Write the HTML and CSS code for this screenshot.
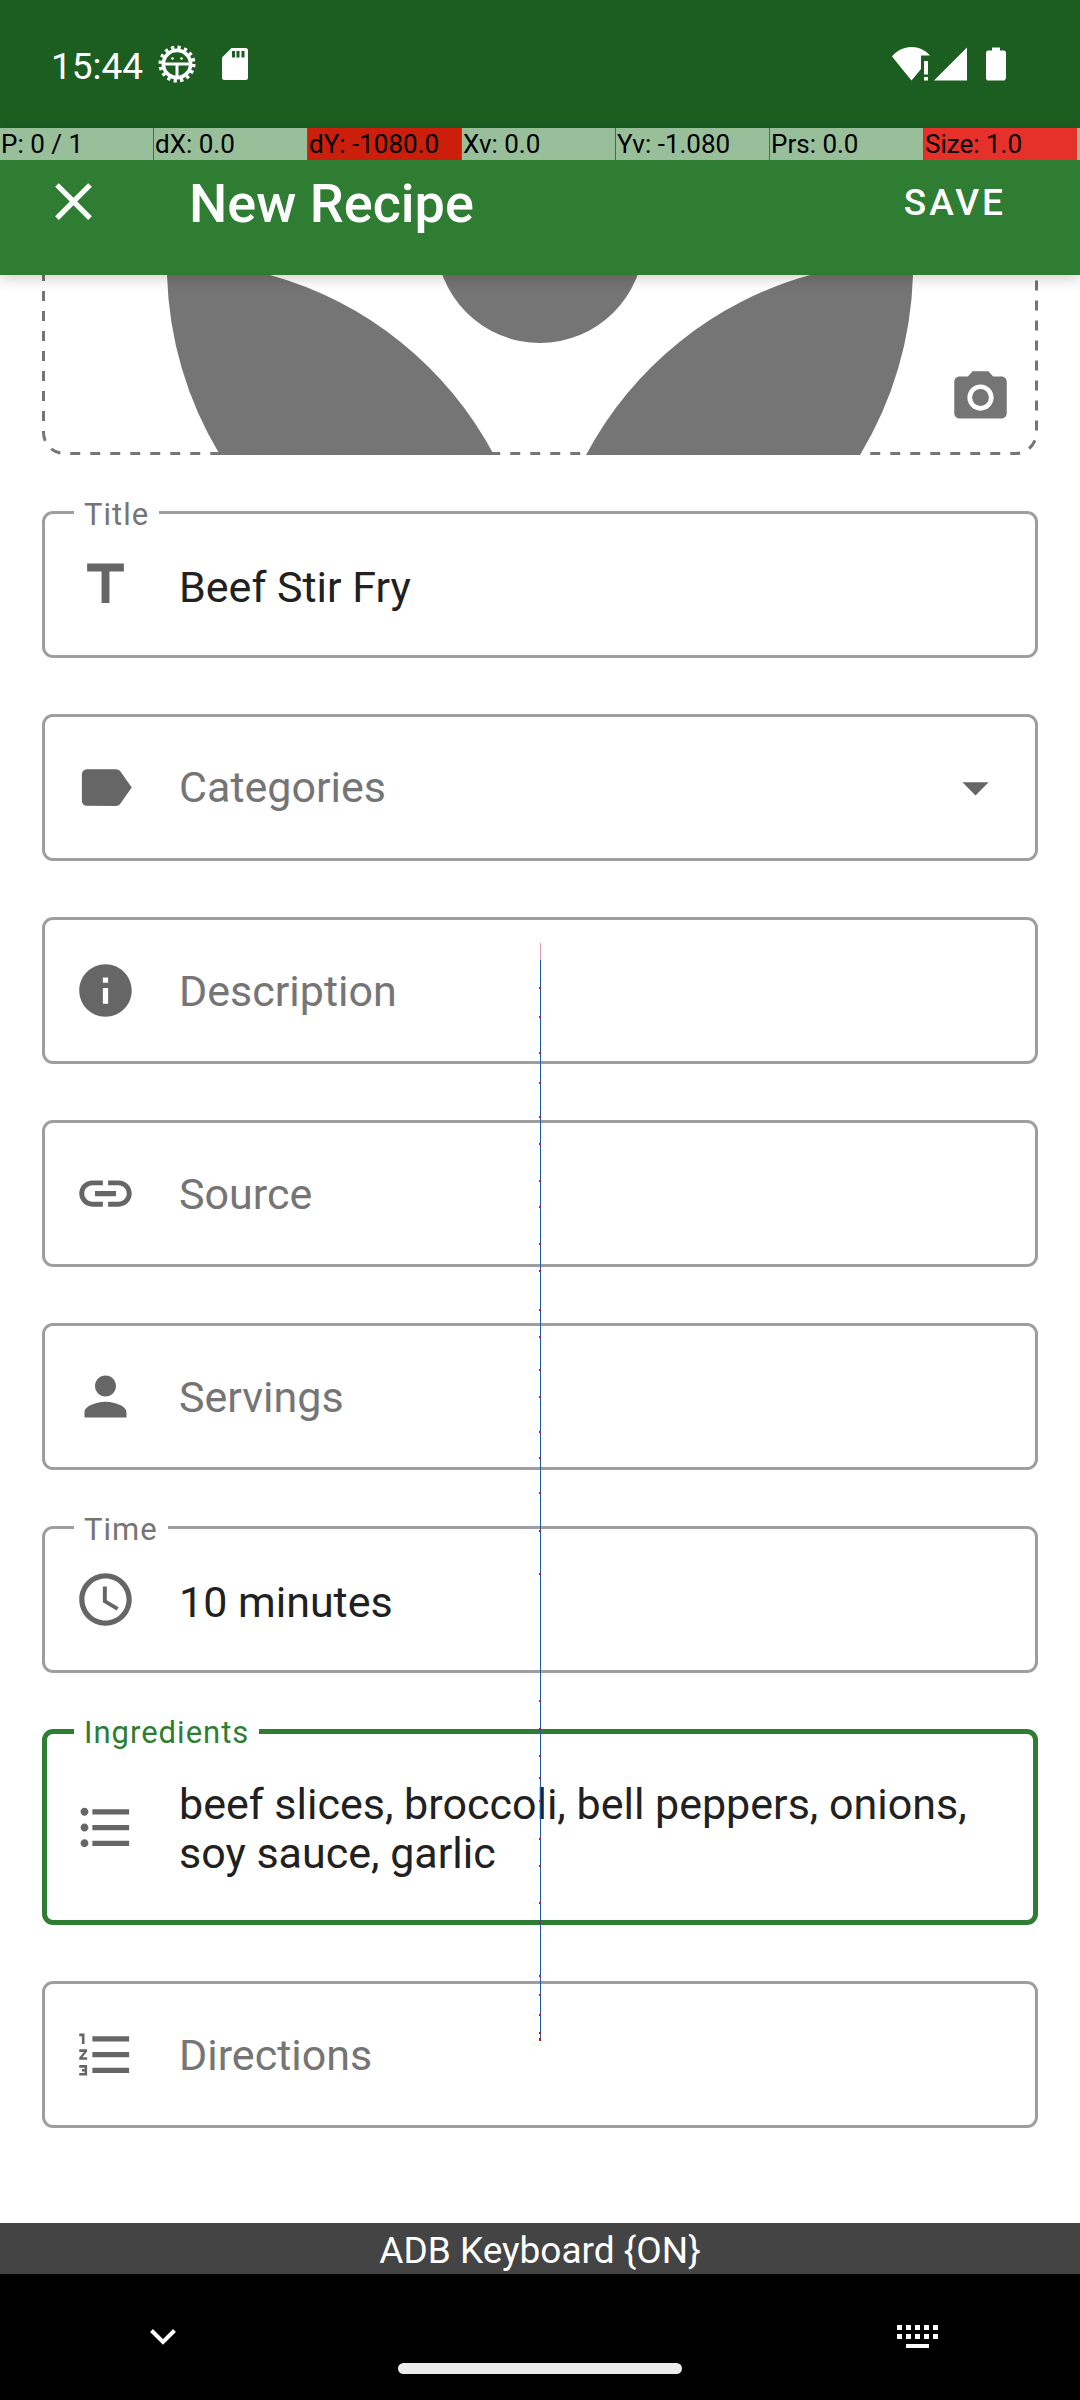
FILE: index.html
```html
<!DOCTYPE html>
<html lang="en">
<head>
<meta charset="utf-8">
<meta name="viewport" content="width=device-width, initial-scale=1">
<title>New Recipe</title>
<link rel="stylesheet" href="styles.css">
</head>
<body>
<div class="status-bar">
  <div class="status-group">
    <span class="clock">15:44</span>
    <svg class="gear" viewBox="0 0 38 38" width="38" height="38" aria-hidden="true">
      <circle cx="19" cy="19" r="16.5" fill="none" stroke="#fff" stroke-width="4" stroke-dasharray="3.2 3.28"/>
      <circle cx="19" cy="19" r="13.6" fill="none" stroke="#fff" stroke-width="3.6"/>
      <path d="M6 17.500h26v3H6zM17.500 20h3v12h-3z" fill="#fff"/>
      <circle cx="14.500" cy="13.500" r="1.300" fill="#fff"/>
      <circle cx="23.500" cy="13.500" r="1.300" fill="#fff"/>
    </svg>
    <svg class="sd" viewBox="0 0 26 32" width="26" height="32" aria-hidden="true">
      <path fill="#fff" fill-rule="evenodd" d="M9.500 0H23.500Q26 0 26 2.500V29.500Q26 32 23.500 32H2.500Q0 32 0 29.500V9.500zM10 3v6.500h3V3zM14.500 3v6.500h3V3zM19.500 3v6.500h3V3z"/>
    </svg>
  </div>
  <div class="status-group">
    <svg viewBox="0 0 76 34" width="76" height="34" aria-hidden="true">
      <path fill="#fff" d="M0 9.500C10-3 28-3 38 8.500H29V22L19.500 33.500zM32 14h4v13.500h-4zM32 30h4v3.500h-4zM42 33.500 75 .5v33z"/>
    </svg>
    <svg class="battery" viewBox="0 0 20 34" width="20" height="34" aria-hidden="true">
      <path fill="#fff" d="M6 .5h8V3.500h4.500L20 5v26.500l-1.500 2h-17L0 32V5l1.500-1.500H6z"/>
    </svg>
  </div>
</div>

<header class="app-bar">
  <div class="debug-strip">
    <span class="metric">P: 0 / 1</span>
    <span class="metric">dX: 0.0</span>
    <span class="metric metric-dark-red">dY: -1080.0</span>
    <span class="metric">Xv: 0.0</span>
    <span class="metric">Yv: -1.080</span>
    <span class="metric metric-marked">Prs: 0.0</span>
    <span class="metric metric-red">Size: 1.0</span>
  </div>
  <button class="bar-button" type="button" aria-label="Close">
    <svg class="icon" viewBox="0 0 24 24"><path d="M19 6.410 17.590 5 12 10.590 6.410 5 5 6.410 10.590 12 5 17.590 6.410 19 12 13.410 17.590 19 19 17.590 13.410 12z"/></svg>
  </button>
  <h1 class="bar-title">New Recipe</h1>
  <button class="bar-button save" type="submit" form="recipe">SAVE</button>
</header>

<main class="content">
  <div class="photo">
    <svg class="photo-art" viewBox="42 275 996 180" aria-hidden="true">
      <g fill="#757575">
        <path d="M167 275H270A363 363 0 0 1 494 455H220A373 373 0 0 1 167 275z"/>
        <path d="M913 275H810A363 363 0 0 0 586 455H860A373 373 0 0 0 913 275z"/>
        <circle cx="540" cy="239" r="104"/>
      </g>
      <path d="M43.500 271V432.500A21 21 0 0 0 64.500 453.500H1015.500A21 21 0 0 0 1036.500 432.500V271" fill="none" stroke="#757575" stroke-width="3" stroke-dasharray="10 10"/>
    </svg>
    <button class="photo-button" type="button" aria-label="Add photo">
      <svg class="icon" viewBox="0 0 24 24"><circle cx="12" cy="12" r="3.200"/><path d="M9 2 7.170 4H4c-1.100 0-2 .9-2 2v12c0 1.100.9 2 2 2h16c1.100 0 2-.9 2-2V6c0-1.100-.9-2-2-2h-3.170L15 2H9zm3 15c-2.760 0-5-2.240-5-5s2.240-5 5-5 5 2.240 5 5-2.240 5-5 5z"/></svg>
    </button>
  </div>

  <form class="form" id="recipe">
    <div class="field filled">
      <label class="label" for="title">Title</label>
      <svg class="icon" viewBox="0 0 24 24" aria-hidden="true"><path d="M5 4v3h5.500v12h3V7H19V4z"/></svg>
      <input class="control" id="title" type="text" value="Beef Stir Fry">
    </div>
    <div class="field">
      <svg class="icon" viewBox="0 0 24 24" aria-hidden="true"><path d="M17.630 5.840C17.270 5.330 16.670 5 16 5L5 5.010C3.900 5.010 3 5.900 3 7v10c0 1.100.9 1.990 2 1.990L16 19c.67 0 1.270-.33 1.630-.84L22 12l-4.370-6.160z"/></svg>
      <select class="control" id="categories" aria-label="Categories"><option>Categories</option></select>
      <svg class="icon arrow" viewBox="0 0 24 24" aria-hidden="true"><path d="m7 10 5 5 5-5z"/></svg>
    </div>
    <div class="field">
      <svg class="icon" viewBox="0 0 24 24" aria-hidden="true"><path d="M12 2C6.480 2 2 6.480 2 12s4.480 10 10 10 10-4.480 10-10S17.520 2 12 2zm1 15h-2v-6h2v6zm0-8h-2V7h2v2z"/></svg>
      <input class="control" type="text" placeholder="Description" aria-label="Description">
    </div>
    <div class="field">
      <svg class="icon" viewBox="0 0 24 24" aria-hidden="true"><path d="M3.900 12c0-1.710 1.390-3.100 3.100-3.100h4V7H7c-2.760 0-5 2.240-5 5s2.240 5 5 5h4v-1.900H7c-1.710 0-3.100-1.390-3.100-3.100zM8 13h8v-2H8v2zm9-6h-4v1.900h4c1.710 0 3.100 1.390 3.100 3.100s-1.390 3.100-3.100 3.100h-4V17h4c2.760 0 5-2.240 5-5s-2.240-5-5-5z"/></svg>
      <input class="control" type="text" placeholder="Source" aria-label="Source">
    </div>
    <div class="field">
      <svg class="icon" viewBox="0 0 24 24" aria-hidden="true"><path d="M12 12c2.210 0 4-1.790 4-4s-1.790-4-4-4-4 1.790-4 4 1.790 4 4 4zm0 2c-2.670 0-8 1.340-8 4v2h16v-2c0-2.660-5.330-4-8-4z"/></svg>
      <input class="control" type="text" placeholder="Servings" aria-label="Servings">
    </div>
    <div class="field filled">
      <label class="label" for="time">Time</label>
      <svg class="icon" viewBox="0 0 24 24" aria-hidden="true"><path d="M11.990 2C6.470 2 2 6.480 2 12s4.470 10 9.990 10C17.520 22 22 17.520 22 12S17.520 2 11.990 2zM12 20c-4.420 0-8-3.580-8-8s3.580-8 8-8 8 3.580 8 8-3.580 8-8 8zm.5-13H11v6l5.250 3.150.75-1.230-4.500-2.670z"/></svg>
      <input class="control" id="time" type="text" value="10 minutes">
    </div>
    <div class="field filled active">
      <label class="label" for="ingredients">Ingredients</label>
      <svg class="icon" viewBox="0 0 24 24" aria-hidden="true"><path d="M4 10.500c-.83 0-1.500.67-1.500 1.500s.67 1.500 1.500 1.500 1.500-.67 1.500-1.500-.67-1.500-1.500-1.500zm0-6c-.83 0-1.500.67-1.500 1.500S3.170 7.500 4 7.500 5.500 6.830 5.500 6 4.830 4.500 4 4.500zm0 12c-.83 0-1.500.68-1.500 1.500s.68 1.500 1.500 1.500 1.500-.68 1.500-1.500-.67-1.500-1.500-1.500zM7 19h14v-2H7v2zm0-6h14v-2H7v2zm0-8v2h14V5H7z"/></svg>
      <textarea class="control" id="ingredients" rows="2">beef slices, broccoli, bell peppers, onions, soy sauce, garlic</textarea>
    </div>
    <div class="field">
      <svg class="icon" viewBox="0 0 24 24" aria-hidden="true"><path d="M2 17h2v.5H3v1h1v.5H2v1h3v-4H2v1zm1-9h1V4H2v1h1v3zm-1 3h1.800L2 13.100v.9h3v-1H3.200L5 10.900V10H2v1zm5-6v2h14V5H7zm0 14h14v-2H7v2zm0-6h14v-2H7v2z"/></svg>
      <input class="control" type="text" placeholder="Directions" aria-label="Directions">
    </div>
  </form>
</main>

<div class="keyboard-bar">ADB Keyboard {ON}</div>
<nav class="nav-bar">
  <button class="nav-button" type="button" aria-label="Hide keyboard">
    <svg viewBox="0 0 26 16" width="26" height="16"><path d="M1.500 1.500 13 13 24.500 1.500" fill="none" stroke="#fff" stroke-width="4"/></svg>
  </button>
  <span class="home-pill"></span>
  <button class="nav-button" type="button" aria-label="Switch keyboard">
    <svg viewBox="0 0 41 24" width="41" height="24"><path fill="#fff" d="M0 0h5v5H0zM9 0h5v5H9zM18 0h5v5h-5zM27 0h5v5h-5zM36 0h5v5h-5zM0 9h5v5H0zM9 9h5v5H9zM18 9h5v5h-5zM27 9h5v5h-5zM36 9h5v5h-5zM9 19h23v4H9z"/></svg>
  </button>
</nav>

<!-- Pointer trail drawn over the screen -->
<svg class="trail" viewBox="0 0 2 1098" width="2" height="1098" aria-hidden="true">
  <path d="M1.500 0v17" stroke="#e59ab5"/>
  <path d="M1.500 17V1098" stroke="#1d58aa"/>
  <path stroke="#b01c38" stroke-width="2" d="M1 44v2M1 73v2M1 109v2M1 139v2M1 173v2M1 200v2M1 237v2M1 263v2M1 300v2M1 327v2M1 366v2M1 393v2M1 426v2M1 453v2M1 488v2M1 514v2M1 549v2M1 587v2M1 630v2M1 757v2M1 785v2M1 812v2M1 834v2M1 857v2M1 895v2M1 922v2M1 959v2M1 979v2M1 1032v2M1 1051v2M1 1071v2M1 1089v2M1 1095v3"/>
</svg>
</body>
</html>
```
FILE: styles.css
```css
* {
  box-sizing: border-box;
}

body {
  position: relative;
  display: flex;
  flex-direction: column;
  min-height: 100vh;
  margin: 0;
  background: #fff;
  color: #212121;
  font-family: Roboto, "Liberation Sans", sans-serif;
}

button {
  padding: 0;
  border: 0;
  background: none;
  color: inherit;
  font: inherit;
}

svg {
  display: block;
  flex: none;
}

.icon {
  width: 63px;
  height: 63px;
  fill: currentColor;
}

/* Status bar */
.status-bar {
  display: flex;
  justify-content: space-between;
  height: 128px;
  padding: 0 74px 0 51px;
  background: #1b5e20;
  color: #fff;
}

.status-group {
  display: flex;
  align-items: center;
}

.clock {
  padding-top: 5px;
  font-size: 37px;
  line-height: 44px;
}

.gear {
  margin-left: 15px;
}

.sd {
  margin-left: 26px;
}

.battery {
  margin-left: 18px;
}

/* App bar */
.app-bar {
  position: relative;
  z-index: 1;
  display: flex;
  align-items: center;
  height: 147px;
  padding: 0 74px 0 42px;
  background: #2e7d32;
  box-shadow: 0 3px 14px rgba(0, 0, 0, 0.2);
  color: #fff;
}

.debug-strip {
  position: absolute;
  top: 0;
  left: 0;
  right: 0;
  display: flex;
  gap: 1px;
  height: 32px;
  border-right: 3px solid #98be9a;
  color: #000;
}

.metric {
  flex: 1;
  padding-left: 1px;
  background: #98be9a;
  font-size: 26px;
  line-height: 32px;
  white-space: nowrap;
}

.metric-dark-red {
  background: #cb1f0b;
}

.metric-red {
  background: #e6302a;
}

.metric-marked {
  box-shadow: -1px 0 #c0392b;
}

.bar-title {
  flex: 1;
  margin: 0;
  padding: 5px 0 0 84px;
  font-size: 54px;
  font-weight: 500;
  line-height: 60px;
}

.save {
  padding-top: 2px;
  font-size: 37px;
  font-weight: 500;
  letter-spacing: 3px;
  line-height: 44px;
}

/* Form */
.content {
  flex: 1;
  padding: 0 42px 95px;
}

.photo {
  position: relative;
  color: #757575;
}

.photo-art {
  width: 100%;
}

.photo-button {
  position: absolute;
  right: 26px;
  bottom: 26px;
}

.form {
  display: flex;
  flex-direction: column;
  gap: 56px;
  padding-top: 56px;
}

.field {
  position: relative;
  display: flex;
  align-items: center;
  padding: 0 31px 0 32px;
  border-radius: 11px;
  box-shadow: inset 0 0 0 3px #9e9e9e;
  color: #666;
}

.field.active {
  box-shadow: inset 0 0 0 5px #2e7d32;
}

.label {
  position: absolute;
  top: -15px;
  left: 32px;
  padding: 0 10px;
  background: #fff;
  color: #757575;
  font-size: 31px;
  letter-spacing: 1px;
  line-height: 38px;
}

.active .label {
  color: #2e7d32;
}

.control {
  display: block;
  flex: 1;
  min-width: 0;
  margin: 0 0 0 42px;
  padding: 49px 0;
  border: 0;
  outline: 0;
  appearance: none;
  resize: none;
  overflow: hidden;
  background: none;
  color: #757575;
  font: 43px/49px Roboto, "Liberation Sans", sans-serif;
}

.control::placeholder {
  color: #757575;
}

.filled .control {
  padding: 51px 0 47px;
  color: #212121;
}

input.control,
select.control {
  height: 147px;
}

/* System bars */
.keyboard-bar {
  padding: 6px 0 1px;
  background: #444;
  color: #fff;
  font-size: 37px;
  line-height: 44px;
  text-align: center;
}

.nav-bar {
  display: flex;
  align-items: center;
  justify-content: space-between;
  height: 126px;
  padding: 0 142px;
  background: #000;
}

.nav-button {
  display: flex;
  justify-content: center;
  width: 41px;
}

.home-pill {
  align-self: flex-end;
  width: 284px;
  height: 11px;
  margin-bottom: 26px;
  border-radius: 6px;
  background: #ebebeb;
}

.trail {
  position: absolute;
  top: 943px;
  left: 50%;
  margin-left: -1px;
  pointer-events: none;
}
```
